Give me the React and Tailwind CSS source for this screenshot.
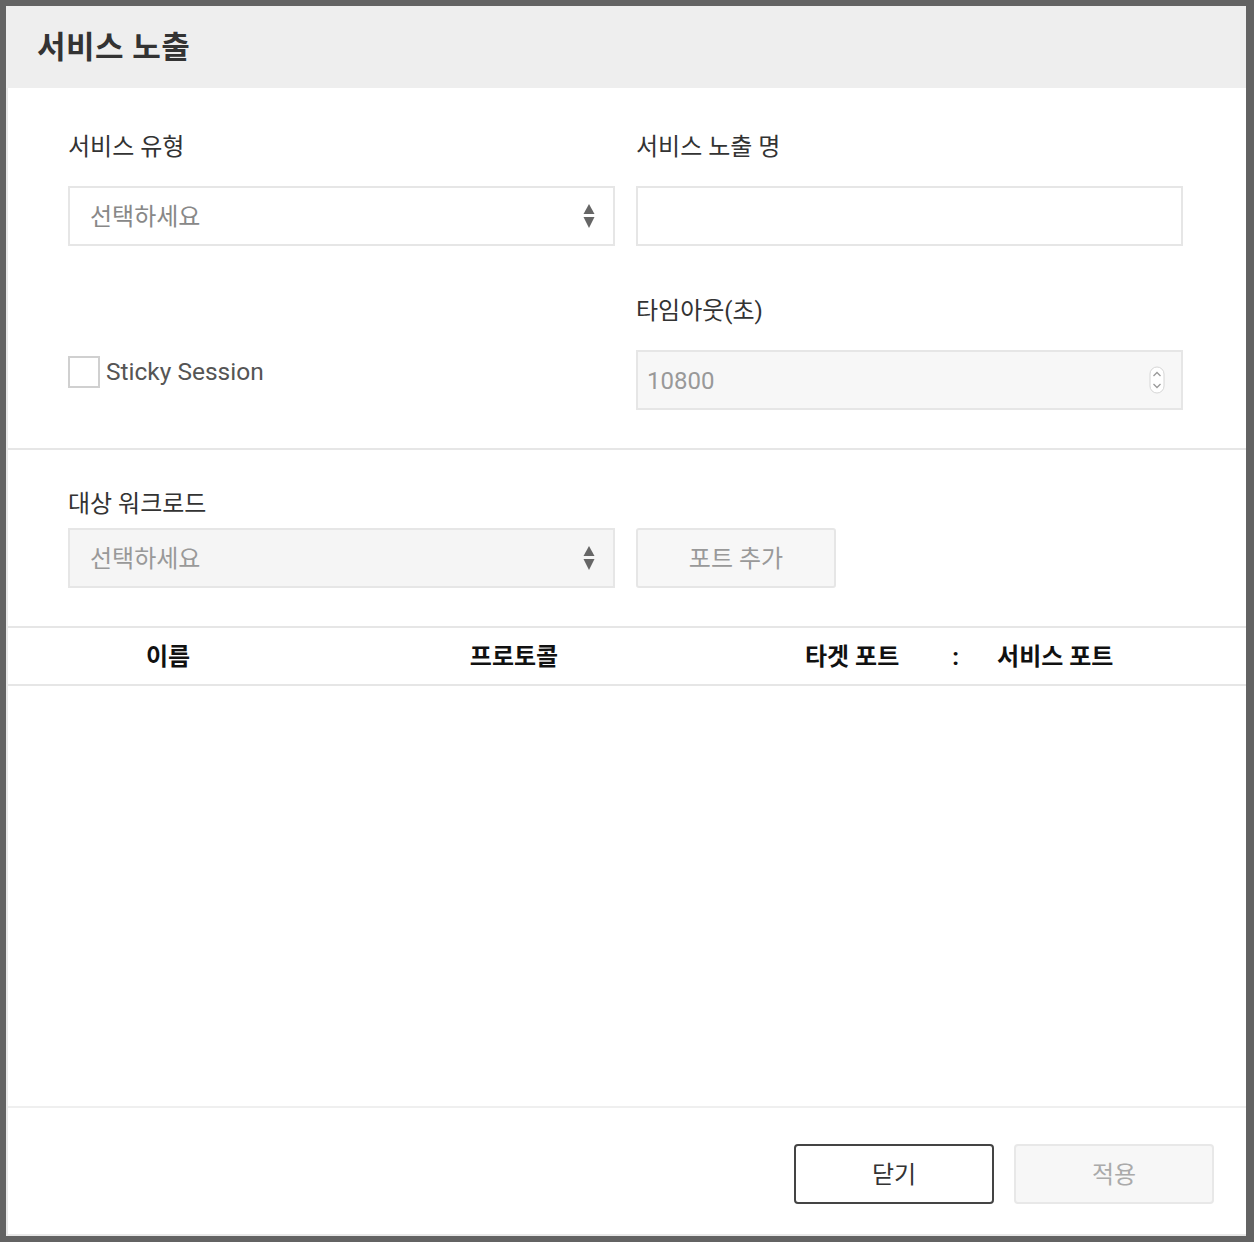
import React from 'react'

const font = { fontFamily: 'Roboto, "Noto Sans CJK KR", sans-serif' }

function SelectArrows() {
  return (
    <svg width="12" height="26" viewBox="0 0 12 26" className="shrink-0">
      <path d="M6 1 L11.5 11 L0.5 11 Z" fill="#666" />
      <path d="M0.5 14 L11.5 14 L6 25 Z" fill="#666" />
    </svg>
  )
}

function Spinner() {
  return (
    <svg width="16" height="28" viewBox="0 0 16 28" className="shrink-0">
      <rect x="1" y="1" width="14" height="26" rx="7" fill="#fff" stroke="#d6d6d6" strokeWidth="1" />
      <path d="M4.5 10 L8 6.5 L11.5 10" fill="none" stroke="#9a9a9a" strokeWidth="1.3" />
      <path d="M4.5 18 L8 21.5 L11.5 18" fill="none" stroke="#9a9a9a" strokeWidth="1.3" />
    </svg>
  )
}

function Label({ children }) {
  return <div className="text-[24px] leading-[33px] text-[#333]">{children}</div>
}

export default function App() {
  return (
    <div className="min-h-[1242px] bg-[#636363] pt-[6px] pl-[6px]" style={font}>
      <div className="w-[1240px] h-[1230px] bg-white flex flex-col">
        <div className="h-[82px] shrink-0 bg-[#eeeeee] pl-[31px] pt-[3px] flex items-center">
          <h1 className="text-[31px] font-bold text-[#333] tracking-[0.5px]">서비스 노출</h1>
        </div>

        <div className="flex-1 flex flex-col border-l-2 border-b-2 border-[#e9e9e9]">
          {/* basic settings */}
          <div className="pt-[43px] pb-[38px] pl-[60px]">
            <div className="grid grid-cols-[547px_547px] gap-x-[21px]">
              <div>
                <Label>서비스 유형</Label>
                <div className="mt-[22px] h-[60px] border-2 border-[#e6e6e6] bg-white flex items-center justify-between pl-[20px] pr-[18px]">
                  <span className="text-[24px] text-[#888] pt-[1px]">선택하세요</span>
                  <SelectArrows />
                </div>
              </div>
              <div>
                <Label>서비스 노출 명</Label>
                <div className="mt-[22px] h-[60px] border-2 border-[#e6e6e6] bg-white" />
              </div>
            </div>

            <div className="grid grid-cols-[547px_547px] gap-x-[21px] mt-[49px]">
              <div className="pt-[61px]">
                <label className="flex items-center gap-[6px]">
                  <span className="w-[32px] h-[32px] border-2 border-[#d0d0d0] bg-white" />
                  <span className="text-[24.5px] leading-[30px] text-[#555]">Sticky Session</span>
                </label>
              </div>
              <div>
                <Label>타임아웃(초)</Label>
                <div className="mt-[22px] h-[60px] border-2 border-[#e6e6e6] bg-[#f7f7f7] flex items-center justify-between pl-[9px] pr-[16px]">
                  <span className="text-[24px] text-[#999] pt-[2px]">10800</span>
                  <Spinner />
                </div>
              </div>
            </div>
          </div>

          <div className="h-[2px] bg-[#e6e6e6]" />

          {/* workload */}
          <div className="pt-[38px] pb-[38px] pl-[60px]">
            <Label>대상 워크로드</Label>
            <div className="mt-[7px] flex gap-[21px]">
              <div className="w-[547px] h-[60px] border-2 border-[#e6e6e6] bg-[#f5f5f5] flex items-center justify-between pl-[20px] pr-[18px]">
                <span className="text-[24px] text-[#999] pt-[1px]">선택하세요</span>
                <SelectArrows />
              </div>
              <button className="w-[200px] h-[60px] border-2 border-[#e6e6e6] bg-[#f7f7f7] rounded-[3px] text-[24px] text-[#999] pt-[1px]">
                포트 추가
              </button>
            </div>
          </div>

          <div className="h-[2px] bg-[#e6e6e6]" />

          {/* table header */}
          <div className="h-[56px] pt-[2px] flex items-center text-[24px] font-bold text-[#111]">
            <div className="w-[320px] text-center">이름</div>
            <div className="w-[372px] text-center">프로토콜</div>
            <div className="flex items-center pl-[105px]">
              <span>타겟 포트</span>
              <span className="ml-[53px]">:</span>
              <span className="ml-[38px]">서비스 포트</span>
            </div>
          </div>
          <div className="h-[2px] bg-[#e6e6e6]" />

          <div className="flex-1" />

          <div className="h-[2px] bg-[#efefef]" />
          {/* footer */}
          <div className="pt-[36px] pb-[30px] pr-[32px] flex justify-end gap-[20px]">
            <button className="w-[200px] h-[60px] border-2 border-[#444] rounded-[4px] bg-white text-[24px] text-[#333] pt-[2px]">
              닫기
            </button>
            <button className="w-[200px] h-[60px] border-2 border-[#e8e8e8] rounded-[4px] bg-[#f7f7f7] text-[24px] text-[#aaa] pt-[2px]">
              적용
            </button>
          </div>
        </div>
      </div>
    </div>
  )
}
